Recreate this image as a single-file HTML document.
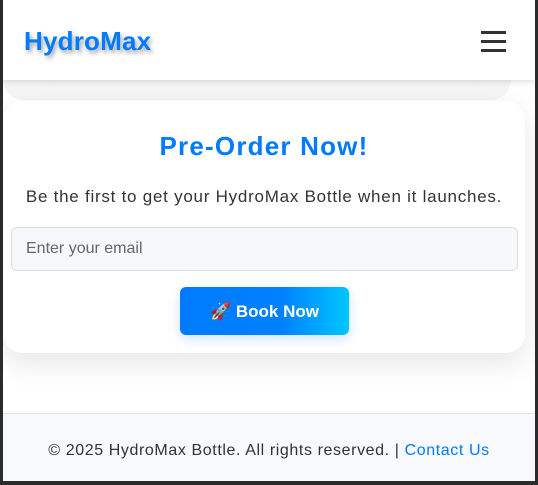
<!DOCTYPE html>
<html><head><style>
*{box-sizing:border-box;margin:0;padding:0}
html,body{width:538px;height:485px;overflow:hidden;background:#2b2b2b;font-family:"Liberation Sans",sans-serif}
.page{position:absolute;left:3px;top:0;width:532px;height:481px;background:#fff;overflow:hidden}
.hdr{position:absolute;left:0;top:0;width:532px;height:80px;background:#fff;box-shadow:0 2px 6px rgba(0,0,0,.12);z-index:2}
.logo{position:absolute;left:21px;top:26px;font-size:26px;font-weight:bold;color:#007bff;text-shadow:2px 3px 4px rgba(0,0,0,.35);letter-spacing:0.2px}
.burger{position:absolute;left:478px;top:31px;width:25px}
.burger div{height:3px;background:#333;margin-bottom:6px}
.prev{position:absolute;left:0;top:40px;width:508px;height:60px;background:#f5f5f5;border-radius:0 0 20px 20px}
.card{position:absolute;left:0;top:101px;width:522px;height:252px;background:#fff;border-radius:20px;box-shadow:0 10px 30px rgba(0,0,0,.1);text-align:center}
h2{position:absolute;left:0;right:0;top:30px;font-size:26px;color:#007bff;font-weight:bold;letter-spacing:1.2px}
p{position:absolute;left:0;right:0;top:86px;font-size:17px;color:#333;letter-spacing:0.75px}
.inp{position:absolute;left:8px;top:126px;width:507px;height:44px;background:#f7f8fc;border:1px solid #ddd;border-radius:6px;text-align:left;padding:12px 14px;font-size:16px;color:#666}
.btn{position:absolute;left:177px;top:186px;width:169px;height:48px;border-radius:6px;background:linear-gradient(90deg,#007bff 0%,#0080ff 60%,#00c6ff 100%);color:#fff;font-weight:bold;font-size:17px;line-height:50px;box-shadow:0 4px 12px rgba(0,123,255,.2)}
.ftr{position:absolute;left:0;top:413px;width:532px;height:68px;background:#f8f9fc;border-top:1px solid #e2e4ea;text-align:center;font-size:16px;color:#333;padding-top:28px;letter-spacing:0.6px}
.ftr a{color:#007bff;text-decoration:none}
</style></head><body>
<div class="page">
<div class="prev"></div>
<div class="hdr"><div class="logo">HydroMax</div><div class="burger"><div></div><div></div><div></div></div></div>
<div class="card">
<h2>Pre-Order Now!</h2>
<p>Be the first to get your HydroMax Bottle when it launches.</p>
<div class="inp">Enter your email</div>
<div class="btn">🚀 Book Now</div>
</div>
<div class="ftr">© 2025 HydroMax Bottle. All rights reserved. | <a>Contact Us</a></div>
</div>
</body></html>
